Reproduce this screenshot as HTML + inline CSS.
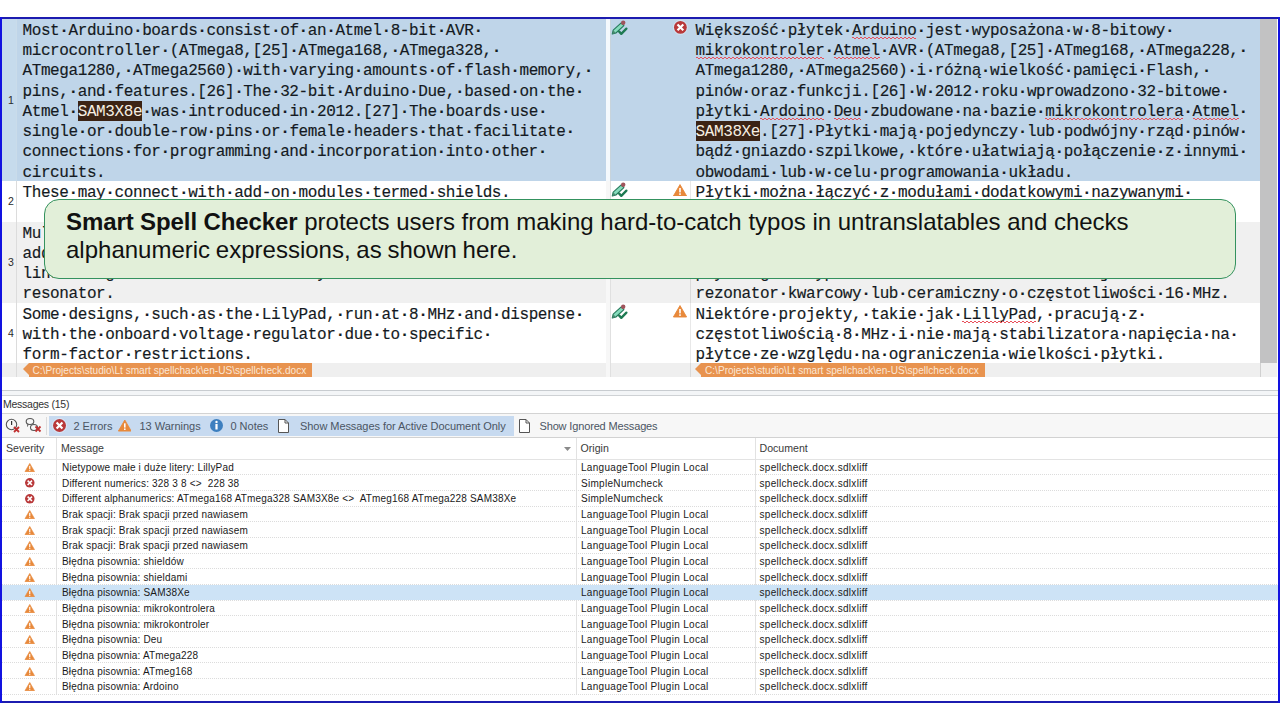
<!DOCTYPE html><html><head><meta charset="utf-8"><style>
*{margin:0;padding:0;box-sizing:border-box}
html,body{width:1280px;height:720px;overflow:hidden;background:#fff}
body{position:relative;font-family:"Liberation Sans",sans-serif}
.a{position:absolute}
.mono{font-family:"Liberation Mono",monospace;font-size:16px;letter-spacing:-0.4px;line-height:20.28px;white-space:pre;color:#141a22;position:absolute;-webkit-text-stroke:0.15px #141a22}
i{font-style:normal;font-weight:bold}
.hl{background:#3b2314;color:#f6efe2;-webkit-text-stroke:0;padding:1.8px 0 0}
.sq{position:relative}.sq:after,.sq:before{content:"";position:absolute;left:0;right:0;height:1px;background:linear-gradient(90deg,#e8505c 50%,transparent 50%);background-size:4px 1px}.sq:before{top:15px}.sq:after{top:16px;background-position:2px 0}
.ln{position:absolute;font-size:10.5px;line-height:12px;color:#2a2a2a;width:14px;text-align:center}
.tag{position:absolute;height:13.5px;background:#e8934f;color:#fbe7d6;font-size:10.1px;line-height:15.5px;white-space:pre;padding-left:4px}
.tag:before{content:"";position:absolute;left:-6px;top:0;border-right:6px solid #e8934f;border-top:6.75px solid transparent;border-bottom:6.75px solid transparent}
.ui{font-size:11px;color:#4b5563;white-space:pre;position:absolute;line-height:13px}
.cell{font-size:10px;letter-spacing:0.3px;color:#1a1a1a;white-space:pre;position:absolute;line-height:12px}
.hdr{font-size:10.6px;color:#3a3a3a;white-space:pre;position:absolute;line-height:13px}
</style></head><body>
<div class="a" style="left:0;top:17px;width:1280px;height:2px;background:#1c1cb0"></div>
<div class="a" style="left:0;top:701px;width:1280px;height:2px;background:#1c1cb0"></div>
<div class="a" style="left:0;top:17px;width:2px;height:686px;background:#1212e0"></div>
<div class="a" style="left:1278px;top:17px;width:2px;height:686px;background:#1212e0"></div>
<div class="a" style="left:2px;top:18.70px;width:1258px;height:162.24px;background:#bfd5e9"></div>
<div class="a" style="left:2px;top:180.94px;width:1258px;height:40.56px;background:#ffffff"></div>
<div class="a" style="left:2px;top:221.50px;width:1258px;height:81.12px;background:#f0f0f0"></div>
<div class="a" style="left:2px;top:302.62px;width:1258px;height:60.84px;background:#ffffff"></div>
<div class="a" style="left:2px;top:363.46px;width:1258px;height:13.54px;background:#efefef"></div>
<div class="a" style="left:2px;top:19px;width:14px;height:161.94px;background:#c6dbec"></div>
<div class="a" style="left:16px;top:19px;width:1px;height:161.94px;background:#cadcea"></div>
<div class="a" style="left:16px;top:180.94px;width:1px;height:196.06px;background:#dcdcdc"></div>
<div class="a" style="left:605.6px;top:19px;width:4px;height:161.94px;background:#f4f9fd"></div>
<div class="a" style="left:605.6px;top:180.94px;width:4px;height:196.06px;background:#f7f7f7"></div>
<div class="a" style="left:609.6px;top:19px;width:1.6px;height:161.94px;background:#c8d4dc"></div>
<div class="a" style="left:609.6px;top:180.94px;width:1.6px;height:196.06px;background:#e0e0e0"></div>
<div class="a" style="left:690px;top:180.94px;width:1px;height:196.06px;background:rgba(0,0,0,0.09)"></div>
<div class="a" style="left:1260px;top:19px;width:17px;height:344.46px;background:#c2c2c3"></div>
<div class="a" style="left:1260px;top:363.46px;width:17px;height:13.54px;background:#f0f0f0"></div>
<div class="a" style="left:1260px;top:363.46px;width:1px;height:13.54px;background:#d0d0d0"></div>
<div class="ln" style="left:4px;top:94.02px">1</div>
<div class="ln" style="left:4px;top:195.42px">2</div>
<div class="ln" style="left:4px;top:256.26px">3</div>
<div class="ln" style="left:4px;top:327.24px">4</div>
<div class="mono" style="left:22.5px;top:20.70px">Most<i>·</i>Arduino<i>·</i>boards<i>·</i>consist<i>·</i>of<i>·</i>an<i>·</i>Atmel<i>·</i>8-bit<i>·</i>AVR<i>·</i></div>
<div class="mono" style="left:22.5px;top:40.98px">microcontroller<i>·</i>(ATmega8,[25]<i>·</i>ATmega168,<i>·</i>ATmega328,<i>·</i></div>
<div class="mono" style="left:22.5px;top:61.26px">ATmega1280,<i>·</i>ATmega2560)<i>·</i>with<i>·</i>varying<i>·</i>amounts<i>·</i>of<i>·</i>flash<i>·</i>memory,<i>·</i></div>
<div class="mono" style="left:22.5px;top:81.54px">pins,<i>·</i>and<i>·</i>features.[26]<i>·</i>The<i>·</i>32-bit<i>·</i>Arduino<i>·</i>Due,<i>·</i>based<i>·</i>on<i>·</i>the<i>·</i></div>
<div class="mono" style="left:22.5px;top:101.82px">Atmel<i>·</i><span class="hl">SAM3X8e</span><i>·</i>was<i>·</i>introduced<i>·</i>in<i>·</i>2012.[27]<i>·</i>The<i>·</i>boards<i>·</i>use<i>·</i></div>
<div class="mono" style="left:22.5px;top:122.10px">single<i>·</i>or<i>·</i>double-row<i>·</i>pins<i>·</i>or<i>·</i>female<i>·</i>headers<i>·</i>that<i>·</i>facilitate<i>·</i></div>
<div class="mono" style="left:22.5px;top:142.38px">connections<i>·</i>for<i>·</i>programming<i>·</i>and<i>·</i>incorporation<i>·</i>into<i>·</i>other<i>·</i></div>
<div class="mono" style="left:22.5px;top:162.66px">circuits.</div>
<div class="mono" style="left:695.6px;top:20.70px">Większość<i>·</i>płytek<i>·</i><span class="sq">Arduino</span><i>·</i>jest<i>·</i>wyposażona<i>·</i>w<i>·</i>8-bitowy<i>·</i></div>
<div class="mono" style="left:695.6px;top:40.98px"><span class="sq">mikrokontroler</span><i>·</i><span class="sq">Atmel</span><i>·</i>AVR<i>·</i>(ATmega8,[25]<i>·</i>ATmeg168,<i>·</i>ATmega228,<i>·</i></div>
<div class="mono" style="left:695.6px;top:61.26px">ATmega1280,<i>·</i>ATmega2560)<i>·</i>i<i>·</i>różną<i>·</i>wielkość<i>·</i>pamięci<i>·</i>Flash,<i>·</i></div>
<div class="mono" style="left:695.6px;top:81.54px">pinów<i>·</i>oraz<i>·</i>funkcji.[26]<i>·</i>W<i>·</i>2012<i>·</i>roku<i>·</i>wprowadzono<i>·</i>32-bitowe<i>·</i></div>
<div class="mono" style="left:695.6px;top:101.82px">płytki<i>·</i><span class="sq">Ardoino</span><i>·</i><span class="sq">Deu</span><i>·</i>zbudowane<i>·</i>na<i>·</i>bazie<i>·</i><span class="sq">mikrokontrolera</span><i>·</i><span class="sq">Atmel</span><i>·</i></div>
<div class="mono" style="left:695.6px;top:122.10px"><span class="hl">SAM38Xe</span>.[27]<i>·</i>Płytki<i>·</i>mają<i>·</i>pojedynczy<i>·</i>lub<i>·</i>podwójny<i>·</i>rząd<i>·</i>pinów<i>·</i></div>
<div class="mono" style="left:695.6px;top:142.38px">bądź<i>·</i>gniazdo<i>·</i>szpilkowe,<i>·</i>które<i>·</i>ułatwiają<i>·</i>połączenie<i>·</i>z<i>·</i>innymi<i>·</i></div>
<div class="mono" style="left:695.6px;top:162.66px">obwodami<i>·</i>lub<i>·</i>w<i>·</i>celu<i>·</i>programowania<i>·</i>układu.</div>
<div class="mono" style="left:22.5px;top:182.94px">These<i>·</i>may<i>·</i>connect<i>·</i>with<i>·</i>add-on<i>·</i>modules<i>·</i>termed<i>·</i>shields.</div>
<div class="mono" style="left:695.6px;top:182.94px">Płytki<i>·</i>można<i>·</i>łączyć<i>·</i>z<i>·</i>modułami<i>·</i>dodatkowymi<i>·</i>nazywanymi<i>·</i></div>
<div class="mono" style="left:695.6px;top:203.22px">shieldami.</div>
<div class="mono" style="left:22.5px;top:223.50px">Multiple<i>·</i>and<i>·</i>possibly<i>·</i>stacked<i>·</i>shields<i>·</i>may<i>·</i>be<i>·</i>individually<i>·</i></div>
<div class="mono" style="left:22.5px;top:243.78px">addressable<i>·</i>via<i>·</i>an<i>·</i>I²C<i>·</i>serial<i>·</i>bus.<i>·</i>Most<i>·</i>boards<i>·</i>include<i>·</i>a<i>·</i>5<i>·</i>V<i>·</i></div>
<div class="mono" style="left:22.5px;top:264.06px">linear<i>·</i>regulator<i>·</i>and<i>·</i>a<i>·</i>16<i>·</i>MHz<i>·</i>crystal<i>·</i>oscillator<i>·</i>or<i>·</i>ceramic<i>·</i></div>
<div class="mono" style="left:22.5px;top:284.34px">resonator.</div>
<div class="mono" style="left:695.6px;top:223.50px">Wiele<i>·</i>shieldów<i>·</i>może<i>·</i>być<i>·</i>adresowanych<i>·</i>indywidualnie<i>·</i></div>
<div class="mono" style="left:695.6px;top:243.78px">przez<i>·</i>magistralę<i>·</i>I2C.<i>·</i>Większość<i>·</i>płytek<i>·</i>zawiera<i>·</i>5<i>·</i>V<i>·</i></div>
<div class="mono" style="left:695.6px;top:264.06px">pły<i>·</i>ek<i>·</i>g<i>·</i><i>·</i>ek<i>·</i>yp<i>·</i><i>·</i><i>·</i><i>·</i>o<i>·</i>ka<i>·</i>o<i>·</i>ka<i>·</i>o<i>·</i>ka<i>·</i>o<i>·</i>ka<i>·</i>o<i>·</i>ka<i>·</i>j<i>·</i>ac<i>·</i>i<i>·</i></div>
<div class="mono" style="left:695.6px;top:284.34px">rezonator<i>·</i>kwarcowy<i>·</i>lub<i>·</i>ceramiczny<i>·</i>o<i>·</i>częstotliwości<i>·</i>16<i>·</i>MHz.</div>
<div class="mono" style="left:22.5px;top:304.62px">Some<i>·</i>designs,<i>·</i>such<i>·</i>as<i>·</i>the<i>·</i>LilyPad,<i>·</i>run<i>·</i>at<i>·</i>8<i>·</i>MHz<i>·</i>and<i>·</i>dispense<i>·</i></div>
<div class="mono" style="left:22.5px;top:324.90px">with<i>·</i>the<i>·</i>onboard<i>·</i>voltage<i>·</i>regulator<i>·</i>due<i>·</i>to<i>·</i>specific<i>·</i></div>
<div class="mono" style="left:22.5px;top:345.18px">form-factor<i>·</i>restrictions.</div>
<div class="mono" style="left:695.6px;top:304.62px">Niektóre<i>·</i>projekty,<i>·</i>takie<i>·</i>jak<i>·</i><span class="sq">LillyPad</span>,<i>·</i>pracują<i>·</i>z<i>·</i></div>
<div class="mono" style="left:695.6px;top:324.90px">częstotliwością<i>·</i>8<i>·</i>MHz<i>·</i>i<i>·</i>nie<i>·</i>mają<i>·</i>stabilizatora<i>·</i>napięcia<i>·</i>na<i>·</i></div>
<div class="mono" style="left:695.6px;top:345.18px">płytce<i>·</i>ze<i>·</i>względu<i>·</i>na<i>·</i>ograniczenia<i>·</i>wielkości<i>·</i>płytki.</div>
<div class="tag" style="left:28.5px;top:363.46px;width:283.5px">C:\Projects\studio\Lt smart spellchack\en-US\spellcheck.docx</div>
<div class="tag" style="left:701px;top:363.46px;width:284px">C:\Projects\studio\Lt smart spellchack\en-US\spellcheck.docx</div>
<svg class="a" style="left:608px;top:18.7px" width="22" height="20" viewBox="0 0 22 20">
<path d="M4.3 15 L5.2 11.2 L13.2 3.9 L15.9 6.6 L7.9 14 Z" fill="#86dcbc" stroke="#23785a" stroke-width="1.1" stroke-linejoin="round"/>
<path d="M4.3 15 L5.2 11.2 L7.9 14 Z" fill="#4a8a70"/>
<circle cx="15.2" cy="3.7" r="2.2" fill="#a0545c"/>
<path d="M11.2 12.6 L13.3 14.9 L18.4 9.6" fill="none" stroke="#1e7a52" stroke-width="2.3" stroke-linecap="round" stroke-linejoin="round"/>
</svg>
<svg class="a" style="left:608px;top:180.94px" width="22" height="20" viewBox="0 0 22 20">
<path d="M4.3 15 L5.2 11.2 L13.2 3.9 L15.9 6.6 L7.9 14 Z" fill="#86dcbc" stroke="#23785a" stroke-width="1.1" stroke-linejoin="round"/>
<path d="M4.3 15 L5.2 11.2 L7.9 14 Z" fill="#4a8a70"/>
<circle cx="15.2" cy="3.7" r="2.2" fill="#a0545c"/>
<path d="M11.2 12.6 L13.3 14.9 L18.4 9.6" fill="none" stroke="#1e7a52" stroke-width="2.3" stroke-linecap="round" stroke-linejoin="round"/>
</svg>
<svg class="a" style="left:608px;top:302.62px" width="22" height="20" viewBox="0 0 22 20">
<path d="M4.3 15 L5.2 11.2 L13.2 3.9 L15.9 6.6 L7.9 14 Z" fill="#86dcbc" stroke="#23785a" stroke-width="1.1" stroke-linejoin="round"/>
<path d="M4.3 15 L5.2 11.2 L7.9 14 Z" fill="#4a8a70"/>
<circle cx="15.2" cy="3.7" r="2.2" fill="#a0545c"/>
<path d="M11.2 12.6 L13.3 14.9 L18.4 9.6" fill="none" stroke="#1e7a52" stroke-width="2.3" stroke-linecap="round" stroke-linejoin="round"/>
</svg>
<svg class="a" style="left:673.0px;top:20.4px" width="14.8" height="14.8" viewBox="-7.4 -7.4 14.8 14.8">
<circle r="6.4" fill="#b9393a"/>
<circle r="7.0" fill="none" stroke="#fff" stroke-opacity="0.35" stroke-width="1"/><path d="M-2.8800000000000003 -2.8800000000000003 L2.8800000000000003 2.8800000000000003 M2.8800000000000003 -2.8800000000000003 L-2.8800000000000003 2.8800000000000003" stroke="#fff" stroke-width="2.176" stroke-linecap="butt"/>
</svg>
<svg class="a" style="left:673px;top:183.54px" width="14" height="12.5" viewBox="0 0 14 12.5">
<path d="M7 0.6 L13.6 12 L0.4 12 Z" fill="#e8893b" stroke="#e8893b" stroke-width="0.9" stroke-linejoin="round"/>
<rect x="6.2" y="4" width="1.6" height="4.4" fill="#fff"/>
<rect x="6.2" y="9.3" width="1.6" height="1.6" fill="#fff"/>
</svg>
<svg class="a" style="left:673px;top:305.22px" width="14" height="12.5" viewBox="0 0 14 12.5">
<path d="M7 0.6 L13.6 12 L0.4 12 Z" fill="#e8893b" stroke="#e8893b" stroke-width="0.9" stroke-linejoin="round"/>
<rect x="6.2" y="4" width="1.6" height="4.4" fill="#fff"/>
<rect x="6.2" y="9.3" width="1.6" height="1.6" fill="#fff"/>
</svg>
<div class="a" style="left:44px;top:199px;width:1192px;height:79.6px;border:1px solid #34925e;border-radius:15px;background:#e2efd9"></div>
<div class="a" style="left:66px;top:207.5px;font-size:24px;line-height:28px;color:#111;white-space:pre"><b style="letter-spacing:-0.1px">Smart Spell Checker</b> protects users from making hard-to-catch typos in untranslatables and checks</div>
<div class="a" style="left:66px;top:235.5px;font-size:24px;line-height:28px;color:#111;white-space:pre;word-spacing:-0.9px">alphanumeric expressions, as shown here.</div>
<div class="a" style="left:2px;top:390px;width:1276px;height:1px;background:#c8ccd0"></div>
<div class="a" style="left:2px;top:391px;width:1276px;height:4px;background:#f3f5f7"></div>
<div class="a" style="left:2px;top:395px;width:1276px;height:1px;background:#cfd2d5"></div>
<div class="ui" style="left:3px;top:397.5px;color:#333;font-size:10.5px;letter-spacing:-0.25px">Messages (15)</div>
<div class="a" style="left:2px;top:413px;width:1276px;height:1px;background:#d3d3d3"></div>
<div class="a" style="left:2px;top:414px;width:1276px;height:23px;background:#f7f7f7"></div>
<div class="a" style="left:49px;top:416px;width:465px;height:20px;background:#c7daf0"></div>
<div class="a" style="left:45.5px;top:417px;width:1px;height:18px;background:#dcdcdc"></div>
<svg class="a" style="left:51.5px;top:418.0px" width="15.0" height="15.0" viewBox="-7.5 -7.5 15.0 15.0">
<circle r="6.5" fill="#b9393a"/>
<circle r="7.1" fill="none" stroke="#fff" stroke-opacity="0.35" stroke-width="1"/><path d="M-2.9250000000000003 -2.9250000000000003 L2.9250000000000003 2.9250000000000003 M2.9250000000000003 -2.9250000000000003 L-2.9250000000000003 2.9250000000000003" stroke="#fff" stroke-width="2.21" stroke-linecap="butt"/>
</svg>
<div class="ui" style="left:73.4px;top:419.6px">2 Errors</div>
<svg class="a" style="left:117.8px;top:418.6px" width="13.6" height="13" viewBox="0 0 14 12.5">
<path d="M7 0.6 L13.6 12 L0.4 12 Z" fill="#e8893b" stroke="#e8893b" stroke-width="0.9" stroke-linejoin="round"/>
<rect x="6.2" y="4" width="1.6" height="4.4" fill="#fff"/>
<rect x="6.2" y="9.3" width="1.6" height="1.6" fill="#fff"/>
</svg>
<div class="ui" style="left:139.4px;top:419.6px">13 Warnings</div>
<svg class="a" style="left:208.8px;top:418.0px" width="15.0" height="15.0" viewBox="-7.5 -7.5 15.0 15.0">
<circle r="6.5" fill="#3d7fbf"/>
<rect x="-1.1" y="-1.6" width="2.2" height="5.6" fill="#fff"/>
<circle cx="0" cy="-3.6" r="1.2" fill="#fff"/>
</svg>
<div class="ui" style="left:230.4px;top:419.6px">0 Notes</div>
<svg class="a" style="left:277px;top:419px" width="13" height="14" viewBox="0 0 13 14">
<path d="M1.5 0.5 H8 L11.5 4 V13.5 H1.5 Z" fill="#fff" stroke="#555" stroke-width="1"/>
<path d="M8 0.5 V4 H11.5" fill="none" stroke="#555" stroke-width="1"/>
</svg>
<div class="ui" style="left:300px;top:419.6px;letter-spacing:-0.06px">Show Messages for Active Document Only</div>
<svg class="a" style="left:518px;top:419px" width="13" height="14" viewBox="0 0 13 14">
<path d="M1.5 0.5 H8 L11.5 4 V13.5 H1.5 Z" fill="#fff" stroke="#555" stroke-width="1"/>
<path d="M8 0.5 V4 H11.5" fill="none" stroke="#555" stroke-width="1"/>
</svg>
<div class="ui" style="left:539.5px;top:419.6px;letter-spacing:-0.15px">Show Ignored Messages</div>
<svg class="a" style="left:5px;top:418px" width="16" height="15" viewBox="0 0 16 15">
<circle cx="6.5" cy="6.5" r="5.2" fill="none" stroke="#555" stroke-width="1.1"/>
<rect x="6" y="3" width="1.2" height="4" fill="#333"/>
<path d="M9 9 L14 14 M14 9 L9 14" stroke="#c03030" stroke-width="1.8"/>
</svg>
<svg class="a" style="left:25px;top:417px" width="17" height="16" viewBox="0 0 17 16">
<ellipse cx="5" cy="4.5" rx="3.8" ry="3" fill="none" stroke="#555" stroke-width="1.1"/>
<path d="M3 7 L2.5 9.5" stroke="#555" stroke-width="1"/>
<ellipse cx="9" cy="10.5" rx="3.5" ry="3" fill="none" stroke="#555" stroke-width="1.1"/>
<path d="M10.5 9.5 L15.5 14.5 M15.5 9.5 L10.5 14.5" stroke="#c03030" stroke-width="1.8"/>
</svg>
<div class="a" style="left:2px;top:437px;width:1276px;height:1px;background:#d2d2d2"></div>
<div class="a" style="left:2px;top:459px;width:1276px;height:1px;background:#e3e3e3"></div>
<div class="hdr" style="left:6px;top:442px">Severity</div>
<div class="hdr" style="left:61px;top:442px">Message</div>
<div class="hdr" style="left:580.6px;top:442px">Origin</div>
<div class="hdr" style="left:759.5px;top:442px">Document</div>
<svg class="a" style="left:564px;top:447px" width="7" height="4" viewBox="0 0 7 4"><path d="M0 0 H7 L3.5 4 Z" fill="#8a8a8a"/></svg>
<div class="a" style="left:56px;top:438px;width:1px;height:256px;background:#e2e2e2"></div>
<div class="a" style="left:576px;top:438px;width:1px;height:256px;background:#e2e2e2"></div>
<div class="a" style="left:755px;top:438px;width:1px;height:256px;background:#e2e2e2"></div>
<div class="a" style="left:2px;top:474.32px;width:1276px;height:1px;background-image:linear-gradient(90deg,#dcdcdc 50%,transparent 50%);background-size:2px 1px"></div>
<svg class="a" style="left:23.5px;top:463.03499999999997px" width="11.5" height="9" viewBox="0 0 14 12.5">
<path d="M7 0.6 L13.6 12 L0.4 12 Z" fill="#e8893b" stroke="#e8893b" stroke-width="0.9" stroke-linejoin="round"/>
<rect x="6.2" y="4" width="1.6" height="4.4" fill="#fff"/>
<rect x="6.2" y="9.3" width="1.6" height="1.6" fill="#fff"/>
</svg>
<div class="cell" style="left:62px;top:462.00px;letter-spacing:0.18px">Nietypowe małe i duże litery: LillyPad</div>
<div class="cell" style="left:581px;top:462.00px">LanguageTool Plugin Local</div>
<div class="cell" style="left:759.5px;top:462.00px">spellcheck.docx.sdlxliff</div>
<div class="a" style="left:2px;top:489.99px;width:1276px;height:1px;background-image:linear-gradient(90deg,#dcdcdc 50%,transparent 50%);background-size:2px 1px"></div>
<svg class="a" style="left:23.7px;top:477.10499999999996px" width="11.6" height="11.6" viewBox="-5.8 -5.8 11.6 11.6">
<circle r="4.8" fill="#b9393a"/>
<circle r="5.3999999999999995" fill="none" stroke="#fff" stroke-opacity="0.35" stroke-width="1"/><path d="M-2.16 -2.16 L2.16 2.16 M2.16 -2.16 L-2.16 2.16" stroke="#fff" stroke-width="1.6320000000000001" stroke-linecap="butt"/>
</svg>
<div class="cell" style="left:62px;top:477.67px;letter-spacing:0.18px">Different numerics: 328 3 8 &lt;&gt;  228 38</div>
<div class="cell" style="left:581px;top:477.67px">SimpleNumcheck</div>
<div class="cell" style="left:759.5px;top:477.67px">spellcheck.docx.sdlxliff</div>
<div class="a" style="left:2px;top:505.66px;width:1276px;height:1px;background-image:linear-gradient(90deg,#dcdcdc 50%,transparent 50%);background-size:2px 1px"></div>
<svg class="a" style="left:23.7px;top:492.7749999999999px" width="11.6" height="11.6" viewBox="-5.8 -5.8 11.6 11.6">
<circle r="4.8" fill="#b9393a"/>
<circle r="5.3999999999999995" fill="none" stroke="#fff" stroke-opacity="0.35" stroke-width="1"/><path d="M-2.16 -2.16 L2.16 2.16 M2.16 -2.16 L-2.16 2.16" stroke="#fff" stroke-width="1.6320000000000001" stroke-linecap="butt"/>
</svg>
<div class="cell" style="left:62px;top:493.34px;letter-spacing:0.18px">Different alphanumerics: ATmega168 ATmega328 SAM3X8e &lt;&gt;  ATmeg168 ATmega228 SAM38Xe</div>
<div class="cell" style="left:581px;top:493.34px">SimpleNumcheck</div>
<div class="cell" style="left:759.5px;top:493.34px">spellcheck.docx.sdlxliff</div>
<div class="a" style="left:2px;top:521.33px;width:1276px;height:1px;background-image:linear-gradient(90deg,#dcdcdc 50%,transparent 50%);background-size:2px 1px"></div>
<svg class="a" style="left:23.5px;top:510.045px" width="11.5" height="9" viewBox="0 0 14 12.5">
<path d="M7 0.6 L13.6 12 L0.4 12 Z" fill="#e8893b" stroke="#e8893b" stroke-width="0.9" stroke-linejoin="round"/>
<rect x="6.2" y="4" width="1.6" height="4.4" fill="#fff"/>
<rect x="6.2" y="9.3" width="1.6" height="1.6" fill="#fff"/>
</svg>
<div class="cell" style="left:62px;top:509.01px;letter-spacing:0.18px">Brak spacji: Brak spacji przed nawiasem</div>
<div class="cell" style="left:581px;top:509.01px">LanguageTool Plugin Local</div>
<div class="cell" style="left:759.5px;top:509.01px">spellcheck.docx.sdlxliff</div>
<div class="a" style="left:2px;top:537.00px;width:1276px;height:1px;background-image:linear-gradient(90deg,#dcdcdc 50%,transparent 50%);background-size:2px 1px"></div>
<svg class="a" style="left:23.5px;top:525.7149999999999px" width="11.5" height="9" viewBox="0 0 14 12.5">
<path d="M7 0.6 L13.6 12 L0.4 12 Z" fill="#e8893b" stroke="#e8893b" stroke-width="0.9" stroke-linejoin="round"/>
<rect x="6.2" y="4" width="1.6" height="4.4" fill="#fff"/>
<rect x="6.2" y="9.3" width="1.6" height="1.6" fill="#fff"/>
</svg>
<div class="cell" style="left:62px;top:524.68px;letter-spacing:0.18px">Brak spacji: Brak spacji przed nawiasem</div>
<div class="cell" style="left:581px;top:524.68px">LanguageTool Plugin Local</div>
<div class="cell" style="left:759.5px;top:524.68px">spellcheck.docx.sdlxliff</div>
<div class="a" style="left:2px;top:552.67px;width:1276px;height:1px;background-image:linear-gradient(90deg,#dcdcdc 50%,transparent 50%);background-size:2px 1px"></div>
<svg class="a" style="left:23.5px;top:541.385px" width="11.5" height="9" viewBox="0 0 14 12.5">
<path d="M7 0.6 L13.6 12 L0.4 12 Z" fill="#e8893b" stroke="#e8893b" stroke-width="0.9" stroke-linejoin="round"/>
<rect x="6.2" y="4" width="1.6" height="4.4" fill="#fff"/>
<rect x="6.2" y="9.3" width="1.6" height="1.6" fill="#fff"/>
</svg>
<div class="cell" style="left:62px;top:540.35px;letter-spacing:0.18px">Brak spacji: Brak spacji przed nawiasem</div>
<div class="cell" style="left:581px;top:540.35px">LanguageTool Plugin Local</div>
<div class="cell" style="left:759.5px;top:540.35px">spellcheck.docx.sdlxliff</div>
<div class="a" style="left:2px;top:568.34px;width:1276px;height:1px;background-image:linear-gradient(90deg,#dcdcdc 50%,transparent 50%);background-size:2px 1px"></div>
<svg class="a" style="left:23.5px;top:557.055px" width="11.5" height="9" viewBox="0 0 14 12.5">
<path d="M7 0.6 L13.6 12 L0.4 12 Z" fill="#e8893b" stroke="#e8893b" stroke-width="0.9" stroke-linejoin="round"/>
<rect x="6.2" y="4" width="1.6" height="4.4" fill="#fff"/>
<rect x="6.2" y="9.3" width="1.6" height="1.6" fill="#fff"/>
</svg>
<div class="cell" style="left:62px;top:556.02px;letter-spacing:0.18px">Błędna pisownia: shieldów</div>
<div class="cell" style="left:581px;top:556.02px">LanguageTool Plugin Local</div>
<div class="cell" style="left:759.5px;top:556.02px">spellcheck.docx.sdlxliff</div>
<div class="a" style="left:2px;top:584.01px;width:1276px;height:1px;background-image:linear-gradient(90deg,#dcdcdc 50%,transparent 50%);background-size:2px 1px"></div>
<svg class="a" style="left:23.5px;top:572.7249999999999px" width="11.5" height="9" viewBox="0 0 14 12.5">
<path d="M7 0.6 L13.6 12 L0.4 12 Z" fill="#e8893b" stroke="#e8893b" stroke-width="0.9" stroke-linejoin="round"/>
<rect x="6.2" y="4" width="1.6" height="4.4" fill="#fff"/>
<rect x="6.2" y="9.3" width="1.6" height="1.6" fill="#fff"/>
</svg>
<div class="cell" style="left:62px;top:571.69px;letter-spacing:0.18px">Błędna pisownia: shieldami</div>
<div class="cell" style="left:581px;top:571.69px">LanguageTool Plugin Local</div>
<div class="cell" style="left:759.5px;top:571.69px">spellcheck.docx.sdlxliff</div>
<div class="a" style="left:2px;top:584.76px;width:1276px;height:15.67px;background:#cde3f6"></div>
<div class="a" style="left:2px;top:599.68px;width:1276px;height:1px;background-image:linear-gradient(90deg,#dcdcdc 50%,transparent 50%);background-size:2px 1px"></div>
<svg class="a" style="left:23.5px;top:588.395px" width="11.5" height="9" viewBox="0 0 14 12.5">
<path d="M7 0.6 L13.6 12 L0.4 12 Z" fill="#e8893b" stroke="#e8893b" stroke-width="0.9" stroke-linejoin="round"/>
<rect x="6.2" y="4" width="1.6" height="4.4" fill="#fff"/>
<rect x="6.2" y="9.3" width="1.6" height="1.6" fill="#fff"/>
</svg>
<div class="cell" style="left:62px;top:587.36px;letter-spacing:0.18px">Błędna pisownia: SAM38Xe</div>
<div class="cell" style="left:581px;top:587.36px">LanguageTool Plugin Local</div>
<div class="cell" style="left:759.5px;top:587.36px">spellcheck.docx.sdlxliff</div>
<div class="a" style="left:2px;top:615.35px;width:1276px;height:1px;background-image:linear-gradient(90deg,#dcdcdc 50%,transparent 50%);background-size:2px 1px"></div>
<svg class="a" style="left:23.5px;top:604.0649999999999px" width="11.5" height="9" viewBox="0 0 14 12.5">
<path d="M7 0.6 L13.6 12 L0.4 12 Z" fill="#e8893b" stroke="#e8893b" stroke-width="0.9" stroke-linejoin="round"/>
<rect x="6.2" y="4" width="1.6" height="4.4" fill="#fff"/>
<rect x="6.2" y="9.3" width="1.6" height="1.6" fill="#fff"/>
</svg>
<div class="cell" style="left:62px;top:603.03px;letter-spacing:0.18px">Błędna pisownia: mikrokontrolera</div>
<div class="cell" style="left:581px;top:603.03px">LanguageTool Plugin Local</div>
<div class="cell" style="left:759.5px;top:603.03px">spellcheck.docx.sdlxliff</div>
<div class="a" style="left:2px;top:631.02px;width:1276px;height:1px;background-image:linear-gradient(90deg,#dcdcdc 50%,transparent 50%);background-size:2px 1px"></div>
<svg class="a" style="left:23.5px;top:619.7349999999999px" width="11.5" height="9" viewBox="0 0 14 12.5">
<path d="M7 0.6 L13.6 12 L0.4 12 Z" fill="#e8893b" stroke="#e8893b" stroke-width="0.9" stroke-linejoin="round"/>
<rect x="6.2" y="4" width="1.6" height="4.4" fill="#fff"/>
<rect x="6.2" y="9.3" width="1.6" height="1.6" fill="#fff"/>
</svg>
<div class="cell" style="left:62px;top:618.70px;letter-spacing:0.18px">Błędna pisownia: mikrokontroler</div>
<div class="cell" style="left:581px;top:618.70px">LanguageTool Plugin Local</div>
<div class="cell" style="left:759.5px;top:618.70px">spellcheck.docx.sdlxliff</div>
<div class="a" style="left:2px;top:646.69px;width:1276px;height:1px;background-image:linear-gradient(90deg,#dcdcdc 50%,transparent 50%);background-size:2px 1px"></div>
<svg class="a" style="left:23.5px;top:635.405px" width="11.5" height="9" viewBox="0 0 14 12.5">
<path d="M7 0.6 L13.6 12 L0.4 12 Z" fill="#e8893b" stroke="#e8893b" stroke-width="0.9" stroke-linejoin="round"/>
<rect x="6.2" y="4" width="1.6" height="4.4" fill="#fff"/>
<rect x="6.2" y="9.3" width="1.6" height="1.6" fill="#fff"/>
</svg>
<div class="cell" style="left:62px;top:634.37px;letter-spacing:0.18px">Błędna pisownia: Deu</div>
<div class="cell" style="left:581px;top:634.37px">LanguageTool Plugin Local</div>
<div class="cell" style="left:759.5px;top:634.37px">spellcheck.docx.sdlxliff</div>
<div class="a" style="left:2px;top:662.36px;width:1276px;height:1px;background-image:linear-gradient(90deg,#dcdcdc 50%,transparent 50%);background-size:2px 1px"></div>
<svg class="a" style="left:23.5px;top:651.0749999999999px" width="11.5" height="9" viewBox="0 0 14 12.5">
<path d="M7 0.6 L13.6 12 L0.4 12 Z" fill="#e8893b" stroke="#e8893b" stroke-width="0.9" stroke-linejoin="round"/>
<rect x="6.2" y="4" width="1.6" height="4.4" fill="#fff"/>
<rect x="6.2" y="9.3" width="1.6" height="1.6" fill="#fff"/>
</svg>
<div class="cell" style="left:62px;top:650.04px;letter-spacing:0.18px">Błędna pisownia: ATmega228</div>
<div class="cell" style="left:581px;top:650.04px">LanguageTool Plugin Local</div>
<div class="cell" style="left:759.5px;top:650.04px">spellcheck.docx.sdlxliff</div>
<div class="a" style="left:2px;top:678.03px;width:1276px;height:1px;background-image:linear-gradient(90deg,#dcdcdc 50%,transparent 50%);background-size:2px 1px"></div>
<svg class="a" style="left:23.5px;top:666.745px" width="11.5" height="9" viewBox="0 0 14 12.5">
<path d="M7 0.6 L13.6 12 L0.4 12 Z" fill="#e8893b" stroke="#e8893b" stroke-width="0.9" stroke-linejoin="round"/>
<rect x="6.2" y="4" width="1.6" height="4.4" fill="#fff"/>
<rect x="6.2" y="9.3" width="1.6" height="1.6" fill="#fff"/>
</svg>
<div class="cell" style="left:62px;top:665.71px;letter-spacing:0.18px">Błędna pisownia: ATmeg168</div>
<div class="cell" style="left:581px;top:665.71px">LanguageTool Plugin Local</div>
<div class="cell" style="left:759.5px;top:665.71px">spellcheck.docx.sdlxliff</div>
<div class="a" style="left:2px;top:693.70px;width:1276px;height:1px;background-image:linear-gradient(90deg,#dcdcdc 50%,transparent 50%);background-size:2px 1px"></div>
<svg class="a" style="left:23.5px;top:682.415px" width="11.5" height="9" viewBox="0 0 14 12.5">
<path d="M7 0.6 L13.6 12 L0.4 12 Z" fill="#e8893b" stroke="#e8893b" stroke-width="0.9" stroke-linejoin="round"/>
<rect x="6.2" y="4" width="1.6" height="4.4" fill="#fff"/>
<rect x="6.2" y="9.3" width="1.6" height="1.6" fill="#fff"/>
</svg>
<div class="cell" style="left:62px;top:681.38px;letter-spacing:0.18px">Błędna pisownia: Ardoino</div>
<div class="cell" style="left:581px;top:681.38px">LanguageTool Plugin Local</div>
<div class="cell" style="left:759.5px;top:681.38px">spellcheck.docx.sdlxliff</div>
</body></html>
